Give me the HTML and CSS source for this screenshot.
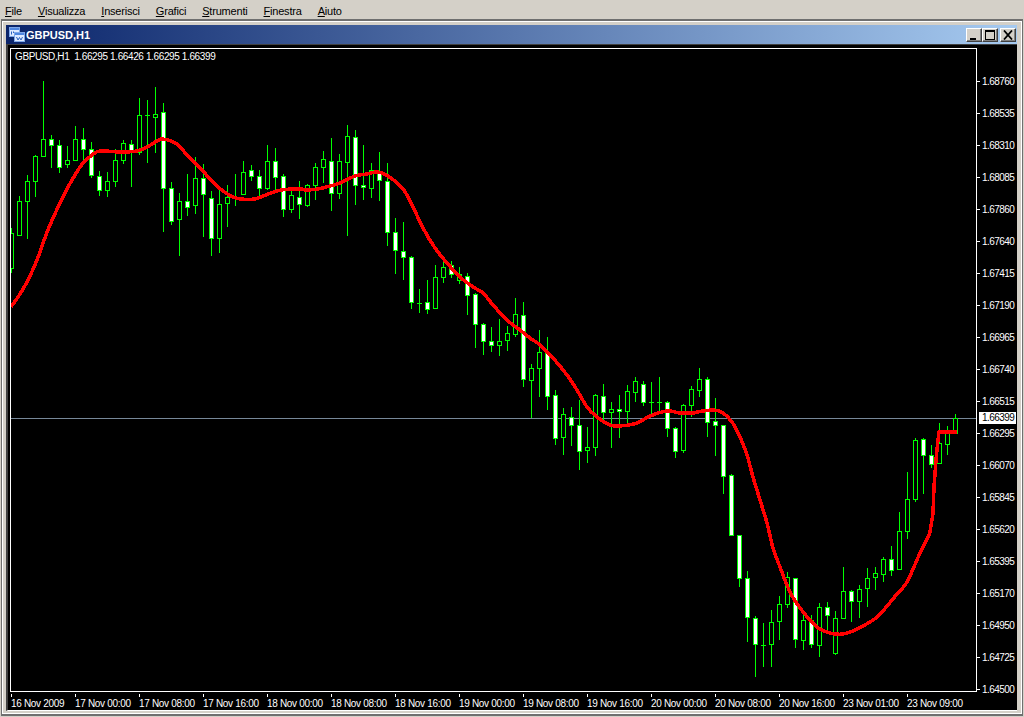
FILE: index.html
```html
<!DOCTYPE html>
<html lang="it">
<head>
<meta charset="utf-8">
<title>GBPUSD,H1</title>
<link rel="stylesheet" href="styles.css">
</head>
<body>
<nav class="menu">
  <span><u>F</u>ile</span>
  <span><u>V</u>isualizza</span>
  <span><u>I</u>nserisci</span>
  <span><u>G</u>rafici</span>
  <span><u>S</u>trumenti</span>
  <span><u>F</u>inestra</span>
  <span><u>A</u>iuto</span>
</nav>
<section class="window">
  <header class="titlebar">
    <svg class="app-icon" width="16" height="16" viewBox="0 0 16 16">
      <rect class="i-back" x="0.5" y="0.5" width="10" height="9"/>
      <rect class="i-bar" x="1" y="1" width="9" height="2"/>
      <rect class="i-front" x="5.5" y="5.5" width="10" height="9"/>
      <rect class="i-bar" x="6" y="6" width="9" height="2"/>
      <path class="i-mark" d="M7.5 10 L9 13 L10.5 10.5 L12 13 L13.5 10"/>
      <path class="i-mark" d="M2.5 4.5 L2.5 7.5 M4.5 4.5 L4.5 6"/>
    </svg>
    <span class="title">GBPUSD,H1</span>
    <div class="caption">
      <button class="cap-btn" type="button" aria-label="Riduci a icona">
        <svg width="12" height="10" viewBox="0 0 12 10"><rect class="glyph" x="2" y="8" width="6" height="2"/></svg>
      </button>
      <button class="cap-btn" type="button" aria-label="Ingrandisci">
        <svg width="12" height="10" viewBox="0 0 12 10"><path class="glyph" d="M1 0H11V10H1ZM2 2V9H10V2Z" fill-rule="evenodd"/></svg>
      </button>
      <button class="cap-btn cap-close" type="button" aria-label="Chiudi">
        <svg width="12" height="10" viewBox="0 0 12 10"><path class="glyph-x" d="M2 0.5 L10 9.5 M10 0.5 L2 9.5"/></svg>
      </button>
    </div>
  </header>
  <div class="chart">
    <div class="plot">
      <div class="legend">GBPUSD,H1  1.66295 1.66426 1.66295 1.66399</div>
      <svg id="candles" class="candles" width="965" height="642" viewBox="11 49 965 642"></svg>
    </div>
    <div class="prices">
      <div class="price">1.68760</div>
      <div class="price">1.68535</div>
      <div class="price">1.68310</div>
      <div class="price">1.68085</div>
      <div class="price">1.67860</div>
      <div class="price">1.67640</div>
      <div class="price">1.67415</div>
      <div class="price">1.67190</div>
      <div class="price">1.66965</div>
      <div class="price">1.66740</div>
      <div class="price">1.66515</div>
      <div class="price">1.66295</div>
      <div class="price">1.66070</div>
      <div class="price">1.65845</div>
      <div class="price">1.65620</div>
      <div class="price">1.65395</div>
      <div class="price">1.65170</div>
      <div class="price">1.64950</div>
      <div class="price">1.64725</div>
      <div class="price">1.64500</div>
      <div class="price-tag">1.66399</div>
    </div>
    <div class="times">
      <div class="time">16 Nov 2009</div>
      <div class="time">17 Nov 00:00</div>
      <div class="time">17 Nov 08:00</div>
      <div class="time">17 Nov 16:00</div>
      <div class="time">18 Nov 00:00</div>
      <div class="time">18 Nov 08:00</div>
      <div class="time">18 Nov 16:00</div>
      <div class="time">19 Nov 00:00</div>
      <div class="time">19 Nov 08:00</div>
      <div class="time">19 Nov 16:00</div>
      <div class="time">20 Nov 00:00</div>
      <div class="time">20 Nov 08:00</div>
      <div class="time">20 Nov 16:00</div>
      <div class="time">23 Nov 01:00</div>
      <div class="time">23 Nov 09:00</div>
    </div>
  </div>
</section>
<script src="chart.js"></script>
</body>
</html>
```
FILE: styles.css
```css
* { box-sizing: border-box; }
html, body { margin: 0; height: 717px; overflow: hidden; }
body {
  background: #d4d0c8;
  font-family: "Liberation Sans", Arial, sans-serif;
  display: flex;
  flex-direction: column;
}
.menu {
  height: 19px;
  display: flex;
  align-items: center;
  gap: 16px;
  padding: 3px 0 0 5px;
  font-size: 11px;
  letter-spacing: -0.2px;
  color: #000;
}
.window {
  width: 1022px;
  height: 697px;
  margin-left: 1px;
  border: 2px solid #6f6f6f;
  border-left-width: 1px;
  border-right-width: 1px;
  background: #d4d0c8;
  box-shadow: inset 1px 1px 0 #fff, inset -1px -1px 0 #fff;
  padding: 4px 5px 3px 4px;
  display: flex;
  flex-direction: column;
}
.titlebar {
  height: 19px;
  flex: none;
  display: flex;
  align-items: center;
  padding: 0 1px 0 3px;
  background: linear-gradient(to right, #0a246a, #a6caf0);
  color: #fff;
}
.app-icon { flex: none; }
.i-back, .i-front { fill: #dfeaff; stroke: #7fa8e8; }
.i-bar { fill: #4f86e0; }
.i-mark { fill: none; stroke: #2a62c0; stroke-width: 1; }
.title {
  margin-left: 1px;
  font-size: 11px;
  font-weight: 700;
}
.caption { margin-left: auto; display: flex; }
.cap-btn {
  width: 16px;
  height: 14px;
  padding: 0;
  background: #d4d0c8;
  border: 1px solid;
  border-color: #fff #404040 #404040 #fff;
  box-shadow: inset -1px -1px 0 #808080;
  display: flex;
  align-items: center;
  justify-content: center;
}
.cap-close { margin-left: 2px; }
.glyph { fill: #000; }
.glyph-x { fill: none; stroke: #000; stroke-width: 1.8; }
.chart {
  flex: 1;
  background: #000;
  border-top: 1px solid #404040;
  border-left: 2px solid #404040;
  border-bottom: 1px solid #fff;
  padding: 3px 0 0 2px;
  display: grid;
  grid-template-columns: 967px 39px;
  grid-template-rows: 644px 1fr;
  color: #fff;
  font-size: 10px;
}
.plot {
  position: relative;
  border: 1px solid #fff;
  overflow: hidden;
}
.candles { display: block; }
.legend {
  position: absolute;
  left: 4px;
  top: 2px;
  white-space: pre;
  letter-spacing: -0.38px;
  z-index: 1;
}
.wick { stroke: #00ff00; stroke-width: 1; fill: none; shape-rendering: crispEdges; }
.body-up { stroke: #00ff00; stroke-width: 1; fill: #000; shape-rendering: crispEdges; }
.body-down { stroke: #00ff00; stroke-width: 1; fill: #fff; shape-rendering: crispEdges; }
.last-line { stroke: #778899; stroke-width: 1; shape-rendering: crispEdges; }
.ma { stroke: #ff0000; stroke-width: 3.5; fill: none; stroke-linejoin: round; shape-rendering: crispEdges; }
.prices {
  position: relative;
  padding-top: 17px;
  display: flex;
  flex-direction: column;
}
.price {
  height: 32px;
  flex: none;
  display: flex;
  align-items: center;
  letter-spacing: -0.55px;
  white-space: nowrap;
}
.price::before {
  content: "";
  width: 3px;
  height: 1px;
  background: #fff;
  margin-right: 2px;
  flex: none;
}
.price-tag {
  position: absolute;
  left: 2px;
  top: 364px;
  width: 37px;
  height: 12px;
  padding-left: 3px;
  background: #fff;
  color: #000;
  line-height: 12px;
  letter-spacing: -0.55px;
}
.times {
  grid-column: 1 / span 2;
  display: flex;
  padding-left: 1px;
}
.time {
  width: 64px;
  flex: none;
  letter-spacing: -0.32px;
  white-space: nowrap;
  padding-top: 2px;
  text-indent: -1px;
}
.time::before {
  content: "";
  display: block;
  width: 1px;
  height: 3px;
  margin-bottom: 1px;
  background: #fff;
}
```
FILE: chart.js
```js
// [x, high, low, bodyTop, bodyBottom, bearish]
var candles = [
[11,228,272,233,268,0],[19,196,235,201,235,0],[27,175,238,181,201,0],[35,155,196,156,181,0],
[43,81,156,139,156,0],[51,135,167,139,145,1],[59,140,172,145,167,1],[67,146,167,160,164,0],
[75,126,160,139,160,0],[83,128,160,139,149,1],[91,142,177,149,175,1],[99,171,195,176,190,1],
[107,172,196,181,190,0],[115,149,186,160,181,0],[123,140,163,143,160,0],[131,140,186,144,151,1],
[139,98,154,115,152,0],[147,100,162,115,115,0],[155,87,152,114,117,0],[163,103,231,112,188,1],
[171,182,224,188,221,1],[179,193,255,201,219,0],[187,174,215,201,207,1],[195,157,213,178,205,0],
[203,164,236,178,194,1],[211,191,255,198,238,1],[219,190,252,204,238,0],[227,185,226,197,203,0],
[235,174,205,197,197,0],[243,161,194,172,194,0],[251,165,180,170,176,1],[259,170,197,176,188,1],
[267,145,189,161,188,0],[275,148,190,161,177,1],[283,174,216,176,209,1],[291,190,212,195,209,0],
[299,181,218,197,204,1],[307,184,206,185,205,0],[315,163,199,167,185,0],[323,151,182,159,167,0],
[331,138,210,161,193,1],[339,154,198,161,193,0],[347,125,235,136,162,0],[355,130,204,137,185,1],
[363,145,199,185,187,1],[371,163,197,170,188,0],[379,152,200,172,180,1],[387,163,245,181,232,1],
[395,218,273,232,250,1],[403,222,279,251,257,1],[411,256,308,257,302,1],[419,289,312,303,303,0],
[427,280,313,302,309,1],[435,265,308,277,308,0],[443,262,282,267,277,0],[451,261,277,265,274,1],
[459,267,283,274,280,0],[467,273,314,276,295,1],[475,293,347,294,324,1],[483,323,354,324,341,1],
[491,327,351,341,345,1],[499,319,355,341,345,0],[507,326,350,333,340,0],[515,298,336,314,334,0],
[523,302,386,315,379,1],[531,364,417,368,380,0],[539,330,396,352,368,0],[547,337,409,353,396,1],
[555,390,444,395,438,1],[563,408,454,414,437,0],[571,407,445,417,425,1],[579,400,469,425,451,1],
[587,427,462,447,450,0],[595,394,455,395,447,0],[603,384,420,396,412,1],[611,402,447,409,412,0],
[619,395,437,409,411,1],[627,385,423,391,411,0],[635,377,401,381,392,0],[643,381,405,384,402,1],
[651,382,413,402,402,0],[659,377,413,402,402,0],[667,401,436,402,428,1],[675,427,457,428,451,1],
[683,404,452,405,450,0],[691,386,416,389,405,0],[699,368,396,379,390,0],[707,377,436,379,422,1],
[715,398,455,421,425,1],[723,425,493,425,476,1],[731,474,535,475,535,1],[739,535,586,535,578,1],
[747,571,641,578,617,1],[755,616,676,618,644,1],[763,623,666,645,645,0],[771,610,666,622,644,0],
[779,596,639,604,621,0],[787,572,607,577,604,0],[795,578,647,578,639,1],[803,613,649,620,640,0],
[811,615,647,620,644,1],[819,603,656,607,645,0],[827,602,630,607,615,1],[835,611,654,618,653,0],
[843,567,618,591,618,0],[851,590,621,591,601,1],[859,585,617,589,601,0],[867,568,606,578,588,0],
[875,567,589,573,577,0],[883,557,581,559,574,0],[891,546,575,559,570,1],[899,512,569,531,569,0],
[907,472,538,499,531,0],[915,438,501,440,499,0],[923,438,493,439,455,1],[931,445,467,455,464,1],
[939,423,463,443,463,0],[947,426,454,433,444,0],[955,414,433,418,433,0]
];
var ma = [
[11,307],[20,294],[28,280],[37,260],[43,243],[50,225],[60,203],[68,187],[75,175],[83,163],[92,155],[100,151],
[118,152],[125,152],[137,151],[147,147],[157,141],[163,139],[177,144],[187,155],[200,168],[213,182],[223,191],
[233,197],[240,199],[255,199],[263,196],[277,191],[290,189],[302,189],[305,190],[318,189],[330,186],[340,183],
[355,176],[367,174],[378,172],[388,176],[403,189],[413,207],[423,228],[435,248],[447,263],[460,277],[473,287],
[483,293],[493,305],[507,320],[520,330],[530,338],[540,345],[553,358],[567,375],[577,390],[587,407],[597,417],
[610,425],[620,426],[637,423],[650,416],[667,411],[680,413],[693,413],[697,412],[713,410],[723,413],[732,422],
[740,437],[747,455],[753,477],[760,500],[767,523],[773,548],[780,567],[790,592],[800,608],[817,627],[830,633],
[843,634],[857,629],[877,617],[897,594],[907,582],[920,553],[930,532],[933,513],[934,487],[936,460],[938,440],
[939,432]
];
var NS = "http://www.w3.org/2000/svg";
var svg = document.getElementById("candles");
function add(tag, cls, attrs) {
  var el = document.createElementNS(NS, tag);
  el.setAttribute("class", cls);
  for (var k in attrs) el.setAttribute(k, attrs[k]);
  svg.appendChild(el);
}
add("line", "last-line", {x1: 11, x2: 976, y1: 418.5, y2: 418.5});
candles.forEach(function (c) {
  var x = c[0], cx = x + 0.5;
  add("line", "wick", {x1: cx, x2: cx, y1: c[1], y2: c[2] + 1});
  if (c[3] === c[4]) {
    add("line", "wick", {x1: x - 2, x2: x + 3, y1: c[3] + 0.5, y2: c[3] + 0.5});
  } else {
    add("rect", c[5] ? "body-down" : "body-up", {x: x - 1.5, y: c[3] + 0.5, width: 4, height: c[4] - c[3]});
  }
});
// Catmull-Rom through the averaged points, then the last straight step.
var d = "M" + ma[0][0] + " " + ma[0][1];
for (var i = 0; i < ma.length - 1; i++) {
  var p0 = ma[Math.max(i - 1, 0)], p1 = ma[i], p2 = ma[i + 1], p3 = ma[Math.min(i + 2, ma.length - 1)];
  if (i > ma.length - 7) { d += " L" + p2[0] + " " + p2[1]; continue; }
  d += " C" + (p1[0] + (p2[0] - p0[0]) / 6) + " " + (p1[1] + (p2[1] - p0[1]) / 6) + " " +
       (p2[0] - (p3[0] - p1[0]) / 6) + " " + (p2[1] - (p3[1] - p1[1]) / 6) + " " + p2[0] + " " + p2[1];
}
d += " L957 432";
add("path", "ma", {d: d});
```
